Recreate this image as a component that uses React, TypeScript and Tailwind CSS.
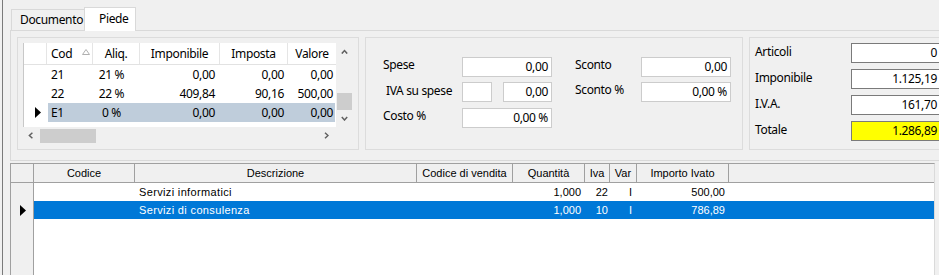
import React from "react";

type Dir = "up" | "down" | "left" | "right";

const Chevron = ({ dir }: { dir: Dir }) => {
  const vertical = dir === "up" || dir === "down";
  const d: Record<Dir, string> = {
    up: "M0.8 4.6 L3.5 1.6 L6.2 4.6",
    down: "M0.8 1 L3.5 4 L6.2 1",
    left: "M4.4 0.8 L1.4 3.5 L4.4 6.2",
    right: "M1 0.8 L4 3.5 L1 6.2",
  };
  return (
    <svg width={vertical ? 7 : 5} height={vertical ? 5 : 7} viewBox={vertical ? "0 0 7 5" : "0 0 5 7"}>
      <path d={d[dir]} fill="none" stroke="#606060" strokeWidth="1.5" />
    </svg>
  );
};

const RowArrow = () => (
  <svg width="6" height="11" viewBox="0 0 6 11">
    <polygon points="0,0 6,5.5 0,11" fill="#000" />
  </svg>
);

const ivaRows = [
  { cod: "21", aliq: "21 %", imp: "0,00", imposta: "0,00", valore: "0,00" },
  { cod: "22", aliq: "22 %", imp: "409,84", imposta: "90,16", valore: "500,00" },
  { cod: "E1", aliq: "0 %", imp: "0,00", imposta: "0,00", valore: "0,00", selected: true },
];

const righe = [
  { descr: "Servizi informatici", qta: "1,000", iva: "22", varr: "I", importo: "500,00" },
  { descr: "Servizi di consulenza", qta: "1,000", iva: "10", varr: "I", importo: "786,89", selected: true },
];

const Field = ({ value, className = "" }: { value: string; className?: string }) => (
  <div className={"h-[20px] bg-white border border-[#cccccc] flex items-center justify-end pr-[3px] " + className}>
    {value}
  </div>
);

const TotField = ({ value, yellow = false }: { value: string; yellow?: boolean }) => (
  <div
    className={
      "w-[90px] h-[20px] border border-[#7a7a7a] flex items-center justify-end pr-[3px] " +
      (yellow ? "bg-[#ffff00]" : "bg-white")
    }
  >
    {value}
  </div>
);

const IvaGrid = () => (
  <div className="w-[342px] h-[113px] shrink-0 border border-[#dcdcdc] pl-[5px] pt-[5px] flex flex-col">
    <div className="flex">
      <div className="w-[313px] h-[84px] bg-white border-l border-[#c8c8c8] flex flex-col">
        <div className="h-[22px] flex border-b border-[#e2e2e2]">
          <div className="w-[23px] border-r border-[#e5e5e5]" />
          <div className="w-[46px] border-r border-[#e5e5e5] flex items-center pl-[4px]">
            Cod
            <svg className="ml-[10px] mb-[3px]" width="8" height="6" viewBox="0 0 8 6">
              <polygon points="4,0.5 7.5,5.5 0.5,5.5" fill="none" stroke="#b0b0b0" strokeWidth="1" />
            </svg>
          </div>
          <div className="w-[47px] border-r border-[#e5e5e5] flex items-center justify-center">Aliq.</div>
          <div className="w-[80px] border-r border-[#e5e5e5] flex items-center justify-center">Imponibile</div>
          <div className="w-[68px] border-r border-[#e5e5e5] flex items-center justify-center">Imposta</div>
          <div className="w-[48px] flex items-center justify-center overflow-hidden whitespace-nowrap">Valore</div>
        </div>
        {ivaRows.map((r) => (
          <div key={r.cod} className="h-[19px] flex">
            <div className="w-[23px] flex items-center pl-[11px]">{r.selected && <RowArrow />}</div>
            <div className={"ml-[1px] flex " + (r.selected ? "bg-[#bfcddb]" : "")}>
              <div className="w-[45px] flex items-center pl-[3px]">{r.cod}</div>
              <div className="w-[47px] flex items-center justify-center pr-[10px]">{r.aliq}</div>
              <div className="w-[80px] flex items-center justify-end pr-[5px]">{r.imp}</div>
              <div className="w-[68px] flex items-center justify-end pr-[4px]">{r.imposta}</div>
              <div className="w-[47px] flex items-center justify-end pr-[2px]">{r.valore}</div>
            </div>
          </div>
        ))}
      </div>
      <div className="w-[17px] h-[84px] flex flex-col">
        <div className="h-[17px] flex items-center justify-center">
          <Chevron dir="up" />
        </div>
        <div className="flex-1 pt-[33px]">
          <div className="ml-[1px] w-[15px] h-[17px] bg-[#cdcdcd]" />
        </div>
        <div className="h-[17px] flex items-center justify-center">
          <Chevron dir="down" />
        </div>
      </div>
    </div>
    <div className="w-[313px] h-[17px] flex">
      <div className="w-[17px] flex items-center justify-center pr-[2px]">
        <Chevron dir="left" />
      </div>
      <div className="flex-1 pt-[2px]">
        <div className="w-[56px] h-[14px] bg-[#cdcdcd]" />
      </div>
      <div className="w-[17px] flex items-center justify-center pr-[2px]">
        <Chevron dir="right" />
      </div>
    </div>
  </div>
);

const SpesePanel = () => (
  <div className="w-[378px] h-[113px] shrink-0 border border-[#dcdcdc] pt-[19px] flex flex-col">
    <div className="flex">
      <div className="w-[96px] pl-[17px] leading-[15px]">Spese</div>
      <Field value="0,00" className="w-[90px]" />
      <div className="w-[23px]" />
      <div className="w-[66px] leading-[15px]">Sconto</div>
      <Field value="0,00" className="w-[90px]" />
    </div>
    <div className="flex mt-[5px]">
      <div className="w-[96px] pl-[20px] leading-[17px]">IVA su spese</div>
      <Field value="" className="w-[30px]" />
      <Field value="0,00" className="w-[49px] ml-[11px]" />
      <div className="w-[23px]" />
      <div className="w-[66px] leading-[15px]">Sconto %</div>
      <Field value="0,00 %" className="w-[90px]" />
    </div>
    <div className="flex mt-[6px]">
      <div className="w-[96px] pl-[17px] leading-[15px]">Costo %</div>
      <Field value="0,00 %" className="w-[90px]" />
    </div>
  </div>
);

const TotaliPanel = () => (
  <div className="flex-1 h-[113px] border-t border-l border-b border-[#dcdcdc] pt-[5px] pl-[5px] flex flex-col gap-[6px]">
    {[
      { l: "Articoli", v: "0" },
      { l: "Imponibile", v: "1.125,19" },
      { l: "I.V.A.", v: "161,70" },
      { l: "Totale", v: "1.286,89", y: true },
    ].map((t) => (
      <div key={t.l} className="flex">
        <div className="w-[96px] leading-[17px]">{t.l}</div>
        <TotField value={t.v} yellow={t.y} />
      </div>
    ))}
  </div>
);

const RigheGrid = () => (
  <div className="mt-[2px] mr-[4px] flex-1 border-t border-l border-[#a0a0a0] border-r-[#dadada] border-r flex flex-col font-['Liberation_Sans',Arial,sans-serif] text-[11px] tracking-normal">
    <div className="h-[19px] flex bg-[#f0f0f0] border-b border-[#a0a0a0]">
      <div className="w-[23px] border-r border-[#a0a0a0]" />
      <div className="w-[101px] border-r border-[#a0a0a0] flex items-center justify-center">Codice</div>
      <div className="w-[282px] border-r border-[#a0a0a0] flex items-center justify-center">Descrizione</div>
      <div className="w-[96px] border-r border-[#a0a0a0] flex items-center justify-center whitespace-nowrap">Codice di vendita</div>
      <div className="w-[72px] border-r border-[#a0a0a0] flex items-center justify-center">Quantità</div>
      <div className="w-[25px] border-r border-[#a0a0a0] flex items-center justify-center">Iva</div>
      <div className="w-[27px] border-r border-[#a0a0a0] flex items-center justify-center">Var</div>
      <div className="w-[92px] border-r border-[#a0a0a0] flex items-center justify-center">Importo Ivato</div>
      <div className="flex-1" />
    </div>
    <div className="flex-1 flex">
      <div className="w-[23px] bg-[#f0f0f0] border-r border-[#a0a0a0] flex flex-col">
        {righe.map((r) => (
          <div key={r.descr} className="h-[18px] flex items-center pl-[9px]">
            {r.selected && <RowArrow />}
          </div>
        ))}
      </div>
      <div className="flex-1 bg-white flex flex-col">
        {righe.map((r) => (
          <div
            key={r.descr}
            className={"h-[18px] flex " + (r.selected ? "bg-[#0078d7] text-white" : "text-black")}
          >
            <div className="w-[101px]" />
            <div className="w-[282px] pl-[4px] flex items-center tracking-[0.35px]">{r.descr}</div>
            <div className="w-[96px]" />
            <div className="w-[72px] pr-[4px] flex items-center justify-end">{r.qta}</div>
            <div className="w-[25px] pr-[2px] flex items-center justify-end">{r.iva}</div>
            <div className="w-[27px] pr-[5px] flex items-center justify-end">{r.varr}</div>
            <div className="w-[92px] pr-[4px] flex items-center justify-end">{r.importo}</div>
            <div className="flex-1" />
          </div>
        ))}
      </div>
    </div>
  </div>
);

export default function App() {
  return (
    <div className="w-[939px] h-[275px] bg-[#f0f0f0] flex overflow-hidden text-black font-['Noto_Sans',sans-serif] text-[12px] tracking-[-0.35px]">
      <div className="w-[10px] shrink-0 flex">
        <div className="ml-[2px] w-px bg-[#7a7a7a]" />
      </div>
      <div className="flex-1 min-w-0 flex flex-col">
        <div className="h-[30px] flex items-end pl-[1px] relative z-10">
          <div className="w-[74px] h-[21px] border border-b-0 border-[#d9d9d9] flex items-center pl-[8px]">
            Documento
          </div>
          <div className="-ml-px -mb-px w-[52px] h-[24px] bg-white border border-b-0 border-[#d9d9d9] flex items-start pt-[2px] pl-[14px]">
            Piede
          </div>
        </div>
        <div className="h-[131px] shrink-0 border-t border-l border-b border-[#d9d9d9] flex gap-[6px] pl-[6px] pt-[6px]">
          <IvaGrid />
          <SpesePanel />
          <TotaliPanel />
        </div>
        <RigheGrid />
      </div>
    </div>
  );
}
